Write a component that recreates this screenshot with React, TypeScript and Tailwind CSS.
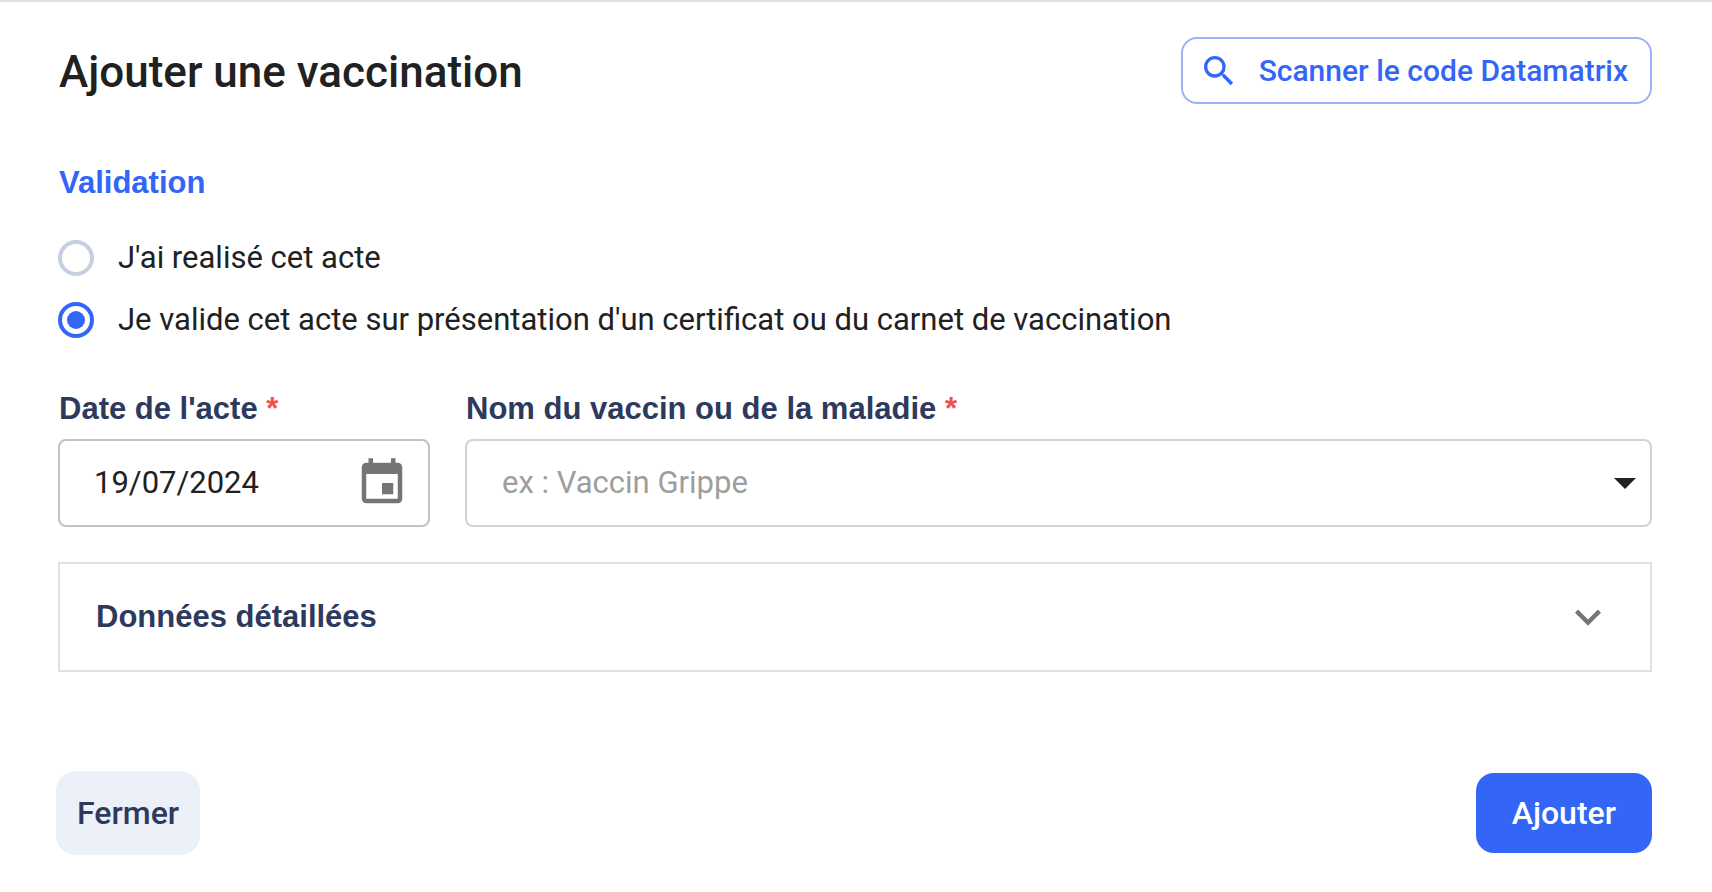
import { useState } from "react";
import { MdEvent, MdExpandMore, MdSearch } from "react-icons/md";

const validationOptions = [
  { value: "done", label: "J'ai realisé cet acte" },
  {
    value: "certificate",
    label: "Je valide cet acte sur présentation d'un certificat ou du carnet de vaccination",
  },
];

const vaccines = ["Vaccin Grippe", "Vaccin Tétanos", "Vaccin Rougeole"];

function FieldLabel({ htmlFor, children }: { htmlFor: string; children: string }) {
  return (
    <label
      htmlFor={htmlFor}
      className="pl-px font-['Liberation_Sans',Arial,sans-serif] font-bold text-[31px] leading-9 text-[#2d3a5e]"
    >
      {children} <span className="text-[#f0524b]">*</span>
    </label>
  );
}

export default function App() {
  const [validation, setValidation] = useState("certificate");
  const [date, setDate] = useState("19/07/2024");
  const [vaccine, setVaccine] = useState("");
  const [open, setOpen] = useState(false);

  return (
    <form
      onSubmit={(e) => e.preventDefault()}
      className="border-t-2 border-[#e0e0e0] bg-white pt-[35px] pr-[60px] pb-9 pl-[58px] font-[Roboto,sans-serif] text-[#212121]"
    >
      {/* Header */}
      <header className="flex items-center justify-between">
        <h1 className="pt-0.5 pl-px font-medium text-[44px] leading-[52px]">Ajouter une vaccination</h1>
        <button
          type="button"
          className="flex h-[67px] items-center gap-5 rounded-2xl border-2 border-[#9ab2fa] pl-4 pr-[22px] font-medium text-[30px] text-[#3366f6]"
        >
          <MdSearch className="size-10" />
          Scanner le code Datamatrix
        </button>
      </header>

      {/* Validation */}
      <fieldset className="mt-[61px]">
        <legend className="pl-px font-['Liberation_Sans',Arial,sans-serif] font-bold text-[31px] leading-9 text-[#3366f6]">
          Validation
        </legend>
        <div className="mt-[39px] flex flex-col gap-[26px]">
          {validationOptions.map((option) => (
            <label key={option.value} className="flex items-center gap-6 text-[31px] leading-9">
              <input
                type="radio"
                name="validation"
                value={option.value}
                checked={validation === option.value}
                onChange={() => setValidation(option.value)}
                className="grid size-9 shrink-0 appearance-none place-items-center rounded-full border-4 border-[#c7cfe2] checked:border-[#3366f6] checked:before:size-[18px] checked:before:rounded-full checked:before:bg-[#3366f6] checked:before:content-['']"
              />
              {option.label}
            </label>
          ))}
        </div>
      </fieldset>

      {/* Date and vaccine */}
      <div className="mt-[53px] flex gap-[35px]">
        <div className="flex w-[372px] flex-col gap-3">
          <FieldLabel htmlFor="date">Date de l'acte</FieldLabel>
          <div className="flex h-[88px] items-center rounded-lg border-2 border-[#c2c2c2] pl-[34px] pr-[19px]">
            <input
              id="date"
              type="text"
              value={date}
              onChange={(e) => setDate(e.target.value)}
              className="min-w-0 flex-1 text-[31px] outline-none"
            />
            <button type="button" aria-label="Ouvrir le calendrier" className="text-[#757575]">
              <MdEvent className="size-[54px]" />
            </button>
          </div>
        </div>
        <div className="flex flex-1 flex-col gap-3">
          <FieldLabel htmlFor="vaccine">Nom du vaccin ou de la maladie</FieldLabel>
          <div className="relative">
            <select
              id="vaccine"
              value={vaccine}
              onChange={(e) => setVaccine(e.target.value)}
              className="h-[88px] w-full appearance-none rounded-lg border-2 border-[#cdd3db] pl-[35px] text-[31px] text-[#9e9e9e] outline-none"
            >
              <option value="" disabled>
                ex : Vaccin Grippe
              </option>
              {vaccines.map((name) => (
                <option key={name}>{name}</option>
              ))}
            </select>
            <svg
              viewBox="0 0 22 11"
              className="pointer-events-none absolute top-[39px] right-4 h-[11px] w-[22px] fill-[#212121]"
            >
              <path d="M0 0h22L11 11z" />
            </svg>
          </div>
        </div>
      </div>

      {/* Detailed data */}
      <button
        type="button"
        aria-expanded={open}
        onClick={() => setOpen(!open)}
        className="mt-[35px] flex h-[110px] w-full items-center justify-between border-2 border-[#e0e0e0] px-9 font-['Liberation_Sans',Arial,sans-serif] font-bold text-[31px] text-[#2d3a5e]"
      >
        Données détaillées
        <MdExpandMore className="size-[52px] text-[#757575]" />
      </button>

      {/* Actions */}
      <footer className="-ml-0.5 mt-[99px] flex items-center justify-between font-medium text-[32px]">
        <button type="button" className="h-[84px] rounded-[20px] bg-[#ecf0f8] px-[21px] text-[#2d3a5e]">
          Fermer
        </button>
        <button type="submit" className="h-20 rounded-[18px] bg-[#3366f6] px-9 text-white">
          Ajouter
        </button>
      </footer>
    </form>
  );
}
